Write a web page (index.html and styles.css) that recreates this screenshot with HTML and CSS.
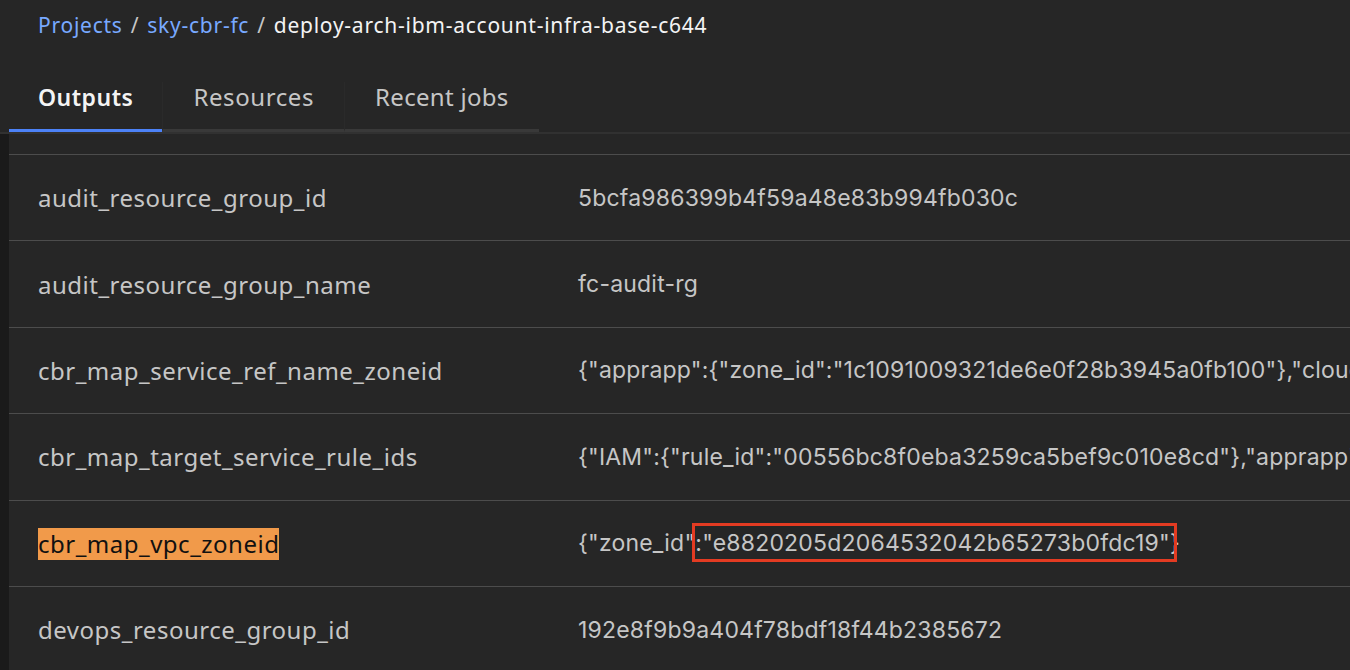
FILE: index.html
```html
<!DOCTYPE html>
<html lang="en">
<head>
<meta charset="utf-8">
<title>deploy-arch-ibm-account-infra-base-c644</title>
<link rel="stylesheet" href="styles.css">
</head>
<body>
<header class="header">
  <nav class="breadcrumb">
    <a class="crumb-link" href="#">Projects</a>
    <span class="sep">/</span>
    <a class="crumb-link" href="#">sky-cbr-fc</a>
    <span class="sep">/</span>
    <span class="crumb-current">deploy-arch-ibm-account-infra-base-c644</span>
  </nav>
  <div class="tabs">
    <div class="tab tab-active">Outputs</div>
    <div class="tab">Resources</div>
    <div class="tab tab-narrow">Recent jobs</div>
  </div>
</header>
<main class="content">
  <div class="table">
    <div class="row row-partial"></div>
    <div class="row">
      <div class="cell key">audit_resource_group_id</div>
      <div class="cell value">5bcfa986399b4f59a48e83b994fb030c</div>
    </div>
    <div class="row">
      <div class="cell key">audit_resource_group_name</div>
      <div class="cell value">fc-audit-rg</div>
    </div>
    <div class="row">
      <div class="cell key">cbr_map_service_ref_name_zoneid</div>
      <div class="cell value">{"apprapp":{"zone_id":"1c1091009321de6e0f28b3945a0fb100"},"cloud-object-storage":{"zone_id":"7a1c26e0bd4fd1b2cf8b3e1a27d8bb32"}}</div>
    </div>
    <div class="row">
      <div class="cell key">cbr_map_target_service_rule_ids</div>
      <div class="cell value">{"IAM":{"rule_id":"00556bc8f0eba3259ca5bef9c010e8cd"},"apprapp":{"rule_id":"3c7d8e41b2a9f0e6d5c4b3a291807f6e"}}</div>
    </div>
    <div class="row">
      <div class="cell key"><span class="highlight">cbr_map_vpc_zoneid</span></div>
      <div class="cell value">{"zone_id"<span class="boxed">:"e8820205d2064532042b65273b0fdc19"}<span class="redbox"></span></span></div>
    </div>
    <div class="row">
      <div class="cell key">devops_resource_group_id</div>
      <div class="cell value">192e8f9b9a404f78bdf18f44b2385672</div>
    </div>
  </div>
</main>
</body>
</html>
```

FILE: styles.css
```css
html, body {
  margin: 0;
  padding: 0;
  background: #262626;
  font-family: "Noto Sans", "Open Sans", sans-serif;
  color: #c6c6c6;
  overflow: hidden;
  height: 670px;
}

.header {
  display: flex;
  flex-direction: column;
}

.breadcrumb {
  display: flex;
  align-items: center;
  gap: 8px;
  padding: 10px 0 0 38px;
  height: 30px;
  font-size: 21px;
  line-height: 30px;
  letter-spacing: 0.75px;
  white-space: nowrap;
}

.crumb-link {
  color: #78a9ff;
  text-decoration: none;
}

.sep {
  color: #c6c6c6;
}

.crumb-current {
  color: #f4f4f4;
}

.tabs {
  display: flex;
  padding: 42px 0 0 9px;
  border-bottom: 2px solid #313131;
}

.tab {
  padding: 0 30px;
  height: 47px;
  line-height: 30px;
  font-size: 24px;
  letter-spacing: 0.6px;
  color: #c6c6c6;
  border-bottom: 3px solid #393939;
  white-space: nowrap;
}

.tab + .tab {
  border-left: 1px solid #2a2a2a;
}

.tab-narrow {
  letter-spacing: 0.3px;
}

.tab-active {
  padding: 0 29px;
  font-size: 23px;
  letter-spacing: 0.5px;
  color: #f4f4f4;
  font-weight: 600;
  border-bottom-color: #4c82f7;
}

.content {
  border-left: 9px solid #1a1a1a;
  height: 600px;
}

.table {
  display: flex;
  flex-direction: column;
}

.row {
  display: grid;
  grid-template-columns: 569px 1fr;
  align-items: center;
  height: 85.4px;
  border-bottom: 1px solid #4c4c4c;
}

.row-partial {
  height: 20px;
}

.cell {
  font-size: 24px;
  white-space: nowrap;
}

.key {
  padding-left: 29px;
  letter-spacing: 0.5px;
  overflow: hidden;
}

.value {
  font-family: "Inter", "Noto Sans", sans-serif;
  font-size: 23px;
  letter-spacing: 0.2px;
  overflow: visible;
}

.highlight {
  background: #f19a4a;
  color: #111111;
  display: inline-block;
  line-height: 32px;
}

.boxed {
  position: relative;
}

.redbox {
  position: absolute;
  left: -3px;
  right: 3px;
  top: -6px;
  bottom: -5px;
  border: 3px solid #e33b22;
}
```
